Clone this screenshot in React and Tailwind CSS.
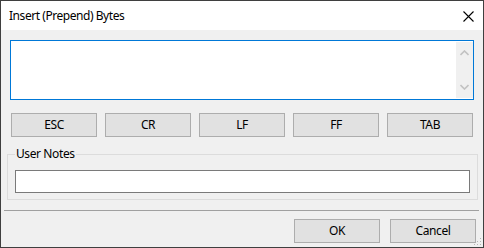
import React from "react";

const font = { fontFamily: '"Segoe UI", "Noto Sans", "Open Sans", sans-serif' };

function Btn({ children, className = "" }) {
  return (
    <div
      className={
        "w-[86px] h-[24px] bg-[#e1e1e1] border border-[#adadad] flex items-center justify-center text-[12px] text-black leading-none tracking-[-0.4px] " +
        className
      }
    >
      {children}
    </div>
  );
}

export default function App() {
  return (
    <div
      className="w-[484px] h-[248px] border border-[#3f3f3f] bg-[#f0f0f0] flex flex-col box-border overflow-hidden relative"
      style={font}
    >
      <div className="h-[29px] bg-white flex items-center justify-between pl-[8px] pr-[9px] shrink-0">
        <span className="text-[12px] text-black tracking-[-0.45px]">Insert (Prepend) Bytes</span>
        <svg width="11" height="11" viewBox="0 0 11 11" className="mt-[1px]">
          <path d="M0.5 0.5 L10.5 10.5 M10.5 0.5 L0.5 10.5" stroke="#000" strokeWidth="1.1" />
        </svg>
      </div>

      <div className="mt-[10px] mx-[9px] h-[60px] border border-[#0078d7] bg-white flex justify-end p-[1px] pr-0">
        <div className="w-[17px] h-full bg-[#f0f0f0] flex flex-col items-center justify-between py-[8px]">
          <svg width="9" height="6" viewBox="0 0 9 6">
            <path d="M0.5 5 L4.5 1 L8.5 5" stroke="#c2c2c2" strokeWidth="1.6" fill="none" />
          </svg>
          <svg width="9" height="6" viewBox="0 0 9 6">
            <path d="M0.5 1 L4.5 5 L8.5 1" stroke="#c2c2c2" strokeWidth="1.6" fill="none" />
          </svg>
        </div>
      </div>

      <div className="mt-[13px] ml-[10px] flex gap-[8px]">
        <Btn>ESC</Btn>
        <Btn>CR</Btn>
        <Btn>LF</Btn>
        <Btn>FF</Btn>
        <Btn>TAB</Btn>
      </div>

      <div className="mt-[17px] ml-[6px] w-[471px] h-[46px] border border-[#dcdcdc] relative">
        <span className="absolute left-[7px] top-[-10px] px-[1px] bg-[#f0f0f0] text-[12px] text-black leading-[18px] tracking-[-0.4px]">
          User Notes
        </span>
        <div className="mt-[15px] ml-[7px] w-[455px] h-[23px] border border-[#7a7a7a] bg-white" />
      </div>

      <div className="mt-[10px] ml-[3px] w-[475px] h-[1px] bg-[#a0a0a0]" />

      <div className="mt-[8px] flex justify-end gap-[10px] mr-[7px]">
        <Btn>OK</Btn>
        <Btn>Cancel</Btn>
      </div>

      <svg width="8" height="8" viewBox="0 0 8 8" className="absolute right-[1px] bottom-[1px]">
        <rect x="6" y="0" width="1" height="1" fill="#b5b5b5" />
        <rect x="3" y="3" width="1" height="1" fill="#b5b5b5" />
        <rect x="6" y="3" width="1" height="1" fill="#b5b5b5" />
        <rect x="0" y="6" width="1" height="1" fill="#b5b5b5" />
        <rect x="3" y="6" width="1" height="1" fill="#b5b5b5" />
        <rect x="6" y="6" width="1" height="1" fill="#b5b5b5" />
      </svg>
    </div>
  );
}
